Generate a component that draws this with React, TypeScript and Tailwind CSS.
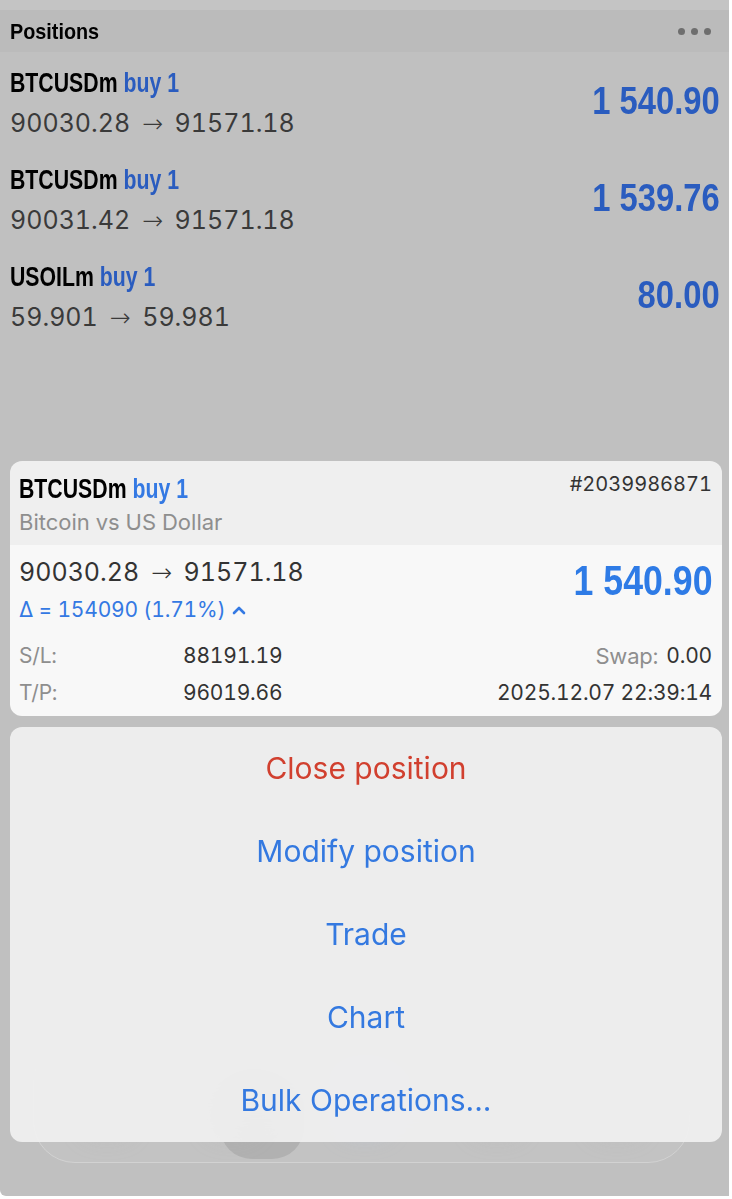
import React from 'react';

const BOLD = "inline-block font-['Liberation_Sans',Arial,sans-serif] font-bold whitespace-nowrap";
const SANS = "font-['Inter','Liberation_Sans',sans-serif] tabular-nums";

const POSITIONS = [
  { symbol: 'BTCUSDm', open: '90030.28', current: '91571.18', profit: '1 540.90' },
  { symbol: 'BTCUSDm', open: '90031.42', current: '91571.18', profit: '1 539.76' },
  { symbol: 'USOILm', open: '59.901', current: '59.981', profit: '80.00' },
];

const ACTIONS = [
  { label: 'Close position', danger: true },
  { label: 'Modify position' },
  { label: 'Trade' },
  { label: 'Chart' },
  { label: 'Bulk Operations...' },
];

function Arrow() {
  return <span className="font-['DejaVu_Sans',sans-serif] font-light mx-[5px]">→</span>;
}

function PositionRow({ p }: { p: (typeof POSITIONS)[number] }) {
  return (
    <div className="h-[97px] pl-[10px] pr-[9px] flex items-center justify-between">
      <div className="flex flex-col">
        <div className="h-[32px] leading-[32px]">
          <span className={`${BOLD} origin-left scale-x-[0.76] text-[28px] text-black`}>
            {p.symbol} <span className="text-[#2a5cbf]">buy 1</span>
          </span>
        </div>
        <div className={`${SANS} mt-[8px] h-[32px] leading-[32px] text-[25px] text-[#3a3a3a]`}>
          {p.open} <Arrow /> {p.current}
        </div>
      </div>
      <span className={`${BOLD} origin-right scale-x-[0.84] text-[39px] leading-[46px] text-[#2a5cbf] pb-[4px]`}>
        {p.profit}
      </span>
    </div>
  );
}

export default function App() {
  return (
    <div className="w-[732px] h-[1199px] bg-white overflow-hidden">
      <div className="relative w-[729px] h-[1196px] rounded-bl-[6px] bg-[#c0c0c0] overflow-hidden">
        <div className="h-[10px] bg-[#c4c4c4]" />
        <div className="h-[42px] bg-[#bbbbbb] flex items-center justify-between px-[10px]">
          <span className={`${BOLD} origin-left scale-x-[0.9] text-[22px] text-black`}>Positions</span>
          <div className="flex gap-[6px] pr-[8px]">
            <span className="w-[7px] h-[7px] rounded-full bg-[#6e6e6e]" />
            <span className="w-[7px] h-[7px] rounded-full bg-[#6e6e6e]" />
            <span className="w-[7px] h-[7px] rounded-full bg-[#6e6e6e]" />
          </div>
        </div>

        <div className="pt-[2px]">
          {POSITIONS.map((p, i) => (
            <PositionRow key={i} p={p} />
          ))}
        </div>

        {/* tab bar under the action sheet */}
        <div className="absolute left-[33px] top-[1040px] w-[657px] h-[123px] rounded-[42px] bg-[#c3c3c3] border border-[#d2d2d2]">
          <div className="absolute left-[186px] top-[34px] w-[84px] h-[84px] rounded-[32px] bg-[#b1b1b1]" />
          <div className="absolute left-[60px] top-[40px] w-[26px] h-[44px] rounded-full bg-[#a8a8a8] blur-lg" />
          <div className="absolute left-[185px] top-[40px] w-[26px] h-[44px] rounded-full bg-[#a8a8a8] blur-lg" />
          <div className="absolute left-[318px] top-[40px] w-[26px] h-[44px] rounded-full bg-[#a9c4ef] blur-lg" />
          <div className="absolute left-[450px] top-[40px] w-[26px] h-[44px] rounded-full bg-[#a8a8a8] blur-lg" />
          <div className="absolute left-[570px] top-[40px] w-[26px] h-[44px] rounded-full bg-[#a8a8a8] blur-lg" />
        </div>

        {/* selected position card */}
        <div className={`relative mt-[116px] ml-[10px] mr-[7px] rounded-[12px] overflow-hidden ${SANS}`}>
          <div className="h-[84px] bg-[#efefef] flex justify-between pl-[9px] pr-[10px]">
            <div className="pt-[12px]">
              <div className="h-[32px] leading-[32px]">
                <span className={`${BOLD} origin-left scale-x-[0.76] text-[28px] text-black`}>
                  BTCUSDm <span className="text-[#3479e3]">buy 1</span>
                </span>
              </div>
              <div className="mt-[3px] h-[28px] leading-[28px] text-[22px] text-[#8e8e8e]">Bitcoin vs US Dollar</div>
            </div>
            <div className="pt-[9px] h-[28px] leading-[28px] text-[20px] text-[#333]">#2039986871</div>
          </div>
          <div className="h-[171px] bg-[#f8f8f8] pl-[9px] pr-[10px] pt-[10px]">
            <div className="flex justify-between items-start">
              <div>
                <div className="h-[34px] leading-[34px] text-[25px] text-[#333]">
                  90030.28 <Arrow /> 91571.18
                </div>
                <div className="mt-[6px] h-[30px] leading-[30px] text-[21px] tracking-[-0.2px] text-[#3479e3] flex items-center gap-[7px]">
                  <span>Δ = 154090 (1.71%)</span>
                  <svg width="14" height="10" viewBox="0 0 14 10" fill="none">
                    <path d="M2 8 L7 3 L12 8" stroke="#3479e3" strokeWidth="2.6" strokeLinecap="round" strokeLinejoin="round" />
                  </svg>
                </div>
              </div>
              <span className={`${BOLD} origin-right scale-x-[0.85] mt-[3px] h-[46px] leading-[46px] text-[42px] text-[#2e7be6]`}>
                1 540.90
              </span>
            </div>
            <div className="mt-[14px] h-[34px] flex items-center text-[21px] tracking-[-0.2px]">
              <span className="w-[164px] text-[#8e8e8e]">S/L:</span>
              <span className="text-[#333]">88191.19</span>
              <span className="ml-auto text-[#8e8e8e] text-[22px]">Swap:</span>
              <span className="ml-[8px] text-[#333]">0.00</span>
            </div>
            <div className="mt-[3px] h-[34px] flex items-center text-[21px] tracking-[-0.2px]">
              <span className="w-[164px] text-[#8e8e8e]">T/P:</span>
              <span className="text-[#333]">96019.66</span>
              <span className="ml-auto text-[#333]">2025.12.07 22:39:14</span>
            </div>
          </div>
        </div>

        {/* action sheet */}
        <div className="relative mt-[11px] ml-[10px] mr-[7px] h-[415px] rounded-[12px] bg-[#f2f2f2]/90 backdrop-blur-xl flex flex-col font-['Inter','Liberation_Sans',sans-serif]">
          {ACTIONS.map((a) => (
            <div
              key={a.label}
              className={`h-[83px] flex items-center justify-center text-[30px] ${a.danger ? 'text-[#d1402f]' : 'text-[#3479e0]'}`}
            >
              {a.label}
            </div>
          ))}
        </div>
      </div>
    </div>
  );
}
